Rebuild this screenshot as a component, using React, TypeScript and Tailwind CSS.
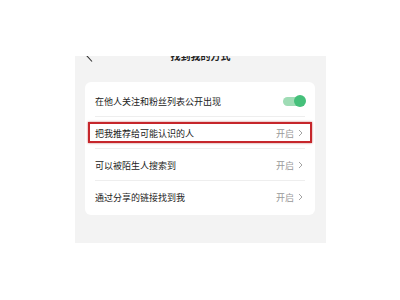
import React from "react";

const font = { fontFamily: '"Noto Sans CJK SC", "Noto Sans", sans-serif' };

function Chevron() {
  return (
    <svg width="5" height="8" viewBox="0 0 5 8" className="ml-[4px]">
      <path d="M1 1 L4 4 L1 7" fill="none" stroke="#9a9a9a" strokeWidth="0.9" />
    </svg>
  );
}

function Row({ label, divider, children }: { label: string; divider?: boolean; children: React.ReactNode }) {
  return (
    <div className="relative h-[32px] flex items-center justify-between pl-[10px] pr-[12px]">
      <span className="text-[9px] leading-none text-[#222]">{label}</span>
      <div className="flex items-center">{children}</div>
      {divider && <div className="absolute left-[10px] right-[10px] bottom-0 h-px bg-[#eeeeee]" />}
    </div>
  );
}

export default function App() {
  return (
    <div className="w-[400px] h-[300px] bg-white pt-[56px] pl-[75px]" style={font}>
      <div className="w-[251px] h-[187px] bg-[#f3f3f3] overflow-hidden">
        <div className="relative h-[12px] -mt-[6px] flex items-center justify-center">
          <svg width="7" height="12" viewBox="0 0 7 12" className="absolute left-[11px] top-0">
            <path d="M6 0.5 L1 6 L6 11.5" fill="none" stroke="#333" strokeWidth="1.1" />
          </svg>
          <span className="text-[10px] leading-[12px] font-bold text-[#222]">找到我的方式</span>
        </div>
        <div className="ml-[10px] mt-[20px] w-[230px] bg-white rounded-[6px] pt-[3px] pb-[2px]">
          <Row label="在他人关注和粉丝列表公开出现" divider>
            <div className="relative w-[22px] h-[9px] rounded-full bg-[#9fdcb5] mr-[-2px]">
              <div className="absolute right-[-1px] top-[-2px] w-[12px] h-[12px] rounded-full bg-[#45c07a]" />
            </div>
          </Row>
          <div className="relative">
            <Row label="把我推荐给可能认识的人" divider>
              <span className="text-[9px] leading-none text-[#999]">开启</span>
              <Chevron />
            </Row>
            <div className="absolute left-[3px] w-[224px] top-[5px] h-[21px] border-2 border-[#c6262b] shadow-[0_0_2px_rgba(160,20,20,0.6)]" />
          </div>
          <Row label="可以被陌生人搜索到" divider>
            <span className="text-[9px] leading-none text-[#999]">开启</span>
            <Chevron />
          </Row>
          <Row label="通过分享的链接找到我">
            <span className="text-[9px] leading-none text-[#999]">开启</span>
            <Chevron />
          </Row>
        </div>
      </div>
    </div>
  );
}
